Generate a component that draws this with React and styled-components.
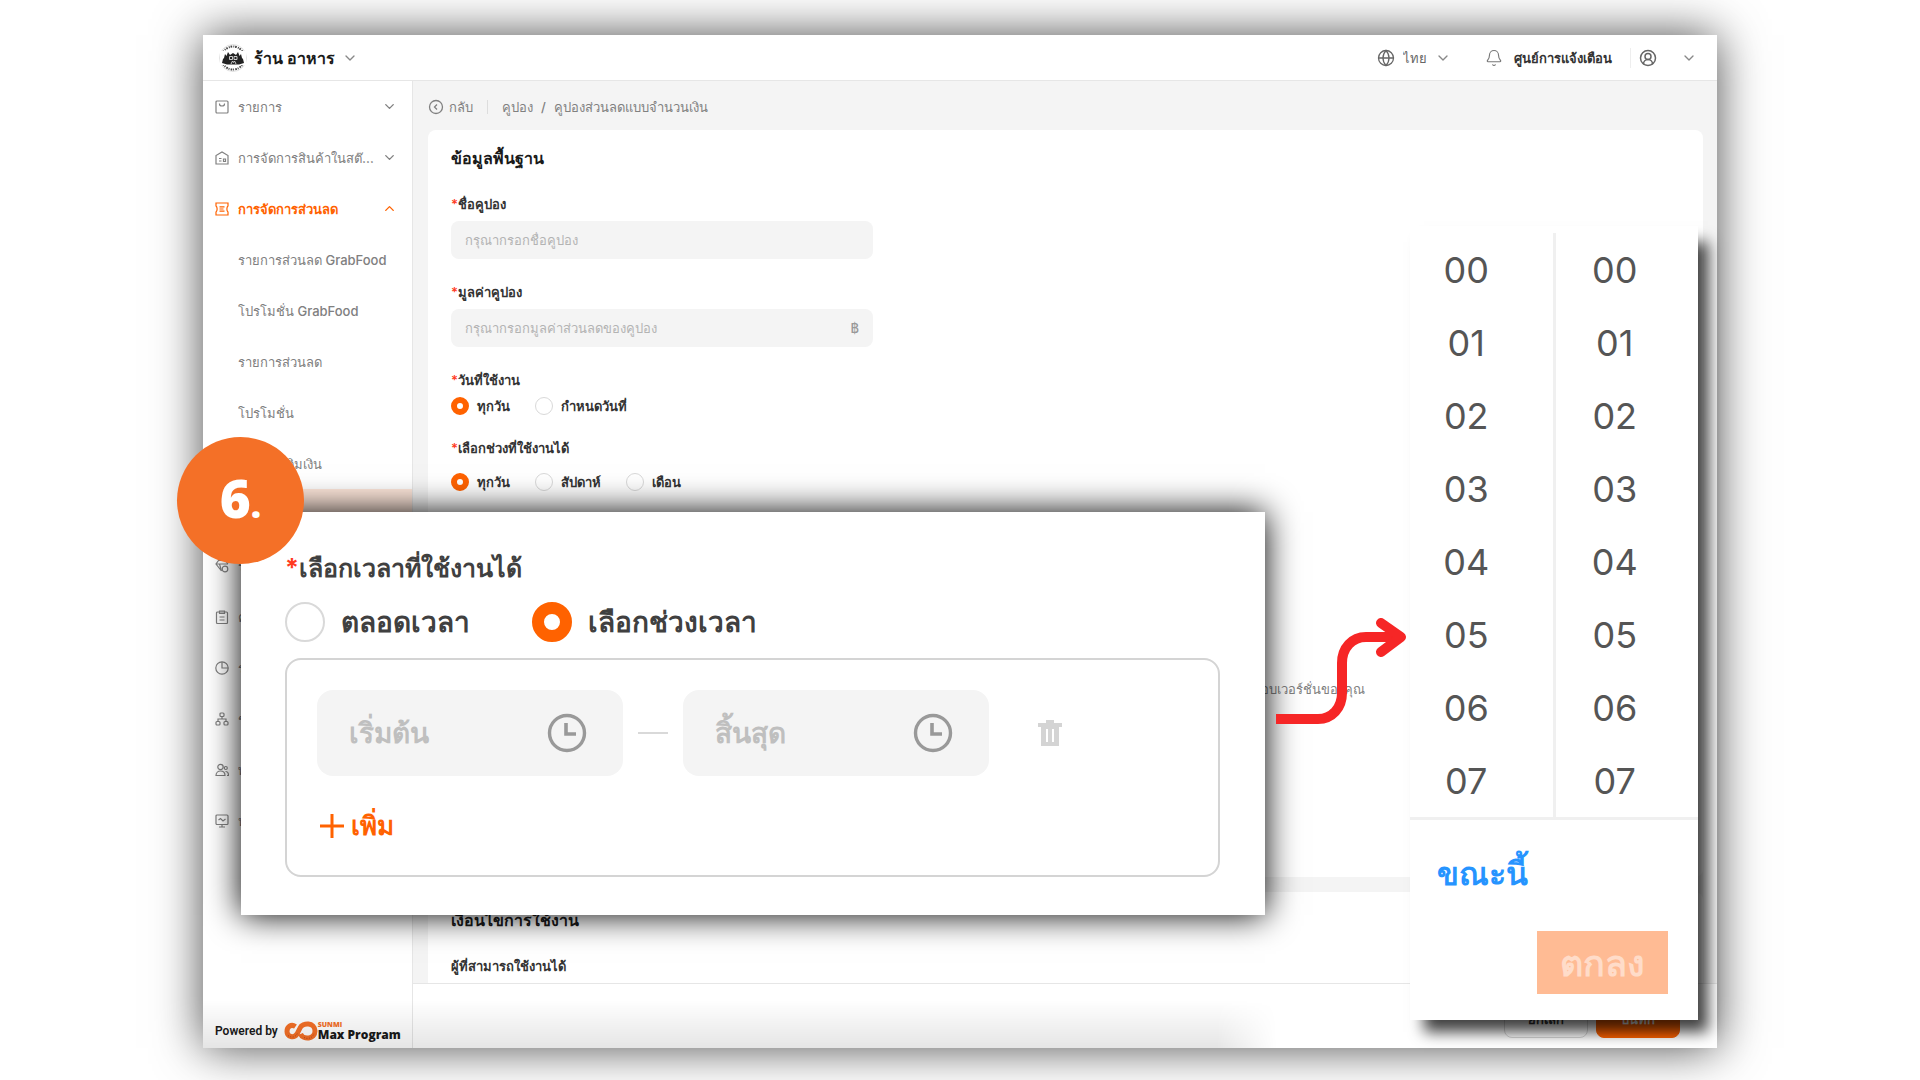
import { useState } from 'react';
import styled, { createGlobalStyle, css } from 'styled-components';
import { Bell, ChevronDown, ChevronUp, CircleUserRound, Globe } from 'lucide-react';

const HOURS = ['00', '01', '02', '03', '04', '05', '06', '07'];

const MENU = [
  { icon: 'bag', label: 'รายการ', arrow: 'down' },
  { icon: 'store', label: 'การจัดการสินค้าในสต๊อก', arrow: 'down' },
  { icon: 'coupon', label: 'การจัดการส่วนลด', arrow: 'up', open: true },
  { label: 'รายการส่วนลด GrabFood' },
  { label: 'โปรโมชั่น GrabFood' },
  { label: 'รายการส่วนลด' },
  { label: 'โปรโมชั่น' },
  { label: 'รายการเติมเงิน' },
  { label: 'คูปอง', active: true },
  { icon: 'gem', label: 'ระบบสมาชิก' },
  { icon: 'clipboard', label: 'คลังสินค้า' },
  { icon: 'pie', label: 'รายงาน' },
  { icon: 'tree', label: 'ช่องทาง' },
  { icon: 'people', label: 'พนักงาน' },
  { icon: 'screen', label: 'หน้าจอ' },
];

const ICONS = {
  bag: <><rect x="1" y="1" width="12" height="12" rx="1" /><path d="M4.5 3.500v.5a2.5 2 0 0 0 5 0v-.5" /></>,
  store: <><path d="M1 13V4.500L7 1l6 3.500V13z" /><path d="M4 7.500h2.500M4 10h2.500M8.500 8h2v2.500h-2z" /></>,
  coupon: <><path d="M1 1h12v3c-1.500 1-1.500 5 0 6v3H1v-3c1.500-1 1.500-5 0-6z" /><path d="M4.500 4.800h5M4.500 7h4M4.500 9.200h5" /></>,
  gem: <><path d="M6.500 12 1 5l2.500-3.500h7L13 5M1 5h12M4.500 5l2 7" /><circle cx="10" cy="10" r="2.800" /></>,
  clipboard: <><rect x="1.500" y="2" width="11" height="11.500" rx="1" /><path d="M4.500 1h5v2.500h-5zM4.500 7h5M4.500 10h5" /></>,
  pie: <><circle cx="7" cy="7" r="6.200" /><path d="M7 1v6h6" /></>,
  tree: <><rect x="5" y="1" width="4" height="3.500" rx="1" /><rect x="1" y="9.500" width="4" height="3.500" rx="1" /><rect x="9" y="9.500" width="4" height="3.500" rx="1" /><path d="M7 4.500V7M3 9.500V7h8v2.500" /></>,
  people: <><circle cx="5.500" cy="4" r="2.700" /><path d="M1 12.500c0-6 9-6 9 0z" /><circle cx="10.800" cy="5" r="1.500" /><path d="M10.500 8.500c2 0 3 1.500 3 4h-1.500" /></>,
  screen: <><rect x="1" y="1" width="12" height="9.500" rx="1" /><path d="M3.500 6 5.500 4.500 8 7l2.500-2M7 10.500V13M4 13h6" /></>,
};

function MenuIcon({ name }) {
  return (
    <svg width="14" height="14" viewBox="0 0 14 14" fill="none" stroke="currentColor" strokeWidth="1.200">
      {ICONS[name]}
    </svg>
  );
}

function ShopLogo() {
  return (
    <svg width="28" height="28" viewBox="0 0 28 28">
      <circle cx="14" cy="14" r="13.500" fill="#fff" stroke="#ccc" strokeWidth=".6" />
      <circle cx="14" cy="14" r="11.500" fill="none" stroke="#444" strokeWidth="2" strokeDasharray="1.400 1 .8 .7" pathLength="60" />
      <path d="M1 7h5v14H1zM22 7h5v14h-5z" fill="#fff" />
      <path d="M3 19l1-4 1-1 1-4 1.500 2L9 8l2 3 3-2 3 2 2-3 1.500 4L22 10l1 4 1 1 1 4-5 1.500H8z" fill="#222" />
      <path d="M10.500 12.500h3v3h-3zM15 12.500h3v3h-3zM12 20l1.500-3 1 1.500 1-1.500 1.500 3" fill="none" stroke="#ddd" strokeWidth=".9" />
    </svg>
  );
}

function BrandLogo() {
  return (
    <svg width="34" height="20" viewBox="0 0 34 20" fill="none" stroke="#f47027" strokeWidth="5">
      <path d="M11.500 5.500C7 2.500 3 6 3 10.500c0 5.500 7 7 10 2.500l3-6C18.500 1.500 31 1 31 10c0 8.500-12 9-14.500 3" />
      <path d="M4 14.500c4 3 8 1.500 9.500-2.500M20 16.500c4 2 9 .5 10-4.500" stroke="#b03a10" strokeWidth=".8" strokeDasharray="1 1.500" />
    </svg>
  );
}

function Clock() {
  return (
    <svg width="40" height="40" viewBox="0 0 40 40" fill="none" stroke="#999" strokeWidth="3.400">
      <circle cx="20" cy="20" r="17.500" />
      <path d="M19 10v11h10" strokeWidth="3.600" />
    </svg>
  );
}

export default function App() {
  const [days, setDays] = useState('every');
  const [range, setRange] = useState('every');
  const [time, setTime] = useState('range');

  return (
    <Page>
      <GlobalStyle />
      <Window>
        <Header>
          <StoreButton>
            <ShopLogo />
            <span>ร้าน อาหาร</span>
            <ChevronDown size={16} color="#888" />
          </StoreButton>
          <Tools>
            <Language>
              <Globe size={18} strokeWidth={1.7} color="#666" />
              <select aria-label="ภาษา" defaultValue="th"><option value="th">ไทย</option></select>
              <ChevronDown size={16} color="#888" />
            </Language>
            <Notice>
              <Bell size={18} strokeWidth={1.500} color="#777" />
              ศูนย์การแจ้งเตือน
            </Notice>
            <Account aria-label="บัญชี">
              <CircleUserRound size={18} strokeWidth={2} color="#666" />
              <ChevronDown size={16} color="#888" />
            </Account>
          </Tools>
        </Header>
        <Body>
          <Sidebar>
            <nav>
              {MENU.map((item, i) => (
                <MenuItem href="#" key={i} $open={item.open} $active={item.active}>
                  <IconSlot>{item.icon && <MenuIcon name={item.icon} />}</IconSlot>
                  <MenuText>{item.label}</MenuText>
                  {item.arrow === 'down' && <ChevronDown size={15} strokeWidth={2.200} />}
                  {item.arrow === 'up' && <ChevronUp size={15} strokeWidth={2.200} />}
                </MenuItem>
              ))}
            </nav>
            <Powered>
              Powered by
              <BrandLogo />
              <Brand><small>SUNMI</small>Max Program</Brand>
            </Powered>
          </Sidebar>
          <Main>
            <Breadcrumb>
              <a href="#">
                <svg width="16" height="16" viewBox="0 0 16 16" fill="none" stroke="currentColor" strokeWidth="1.300">
                  <circle cx="8" cy="8" r="6.500" /><path d="M9 5.500 6.500 8 9 10.500" />
                </svg>
                กลับ
              </a>
              <Rule />
              <a href="#">คูปอง</a>
              <b>/</b>
              <span>คูปองส่วนลดแบบจำนวนเงิน</span>
            </Breadcrumb>
            <Cards>
              <Card $tall>
                <h2>ข้อมูลพื้นฐาน</h2>
                <Field>
                  <label htmlFor="name"><Star>*</Star>ชื่อคูปอง</label>
                  <TextBox><input id="name" placeholder="กรุณากรอกชื่อคูปอง" /></TextBox>
                </Field>
                <Field>
                  <label htmlFor="value"><Star>*</Star>มูลค่าคูปอง</label>
                  <TextBox><input id="value" placeholder="กรุณากรอกมูลค่าส่วนลดของคูปอง" />฿</TextBox>
                </Field>
                <RadioSet>
                  <legend><Star>*</Star>วันที่ใช้งาน</legend>
                  <Choices>
                    <Choice><Radio name="days" checked={days === 'every'} onChange={() => setDays('every')} />ทุกวัน</Choice>
                    <Choice><Radio name="days" checked={days === 'fixed'} onChange={() => setDays('fixed')} />กำหนดวันที่</Choice>
                  </Choices>
                </RadioSet>
                <RadioSet $loose>
                  <legend><Star>*</Star>เลือกช่วงที่ใช้งานได้</legend>
                  <Choices>
                    <Choice><Radio name="range" checked={range === 'every'} onChange={() => setRange('every')} />ทุกวัน</Choice>
                    <Choice><Radio name="range" checked={range === 'week'} onChange={() => setRange('week')} />สัปดาห์</Choice>
                    <Choice><Radio name="range" checked={range === 'month'} onChange={() => setRange('month')} />เดือน</Choice>
                  </Choices>
                </RadioSet>
                <Hint>โปรดตรวจสอบเวอร์ชั่นของคุณ</Hint>
              </Card>
              <Card>
                <h2>เงื่อนไขการใช้งาน</h2>
                <Field><label>ผู้ที่สามารถใช้งานได้</label></Field>
              </Card>
            </Cards>
            <Footer>
              <FooterButton>ยกเลิก</FooterButton>
              <FooterButton $primary>บันทึก</FooterButton>
            </Footer>
          </Main>
        </Body>
      </Window>

      <TimePanel>
        <h3><Star>*</Star>เลือกเวลาที่ใช้งานได้</h3>
        <Choices $large>
          <Choice $large><Radio $large name="time" checked={time === 'all'} onChange={() => setTime('all')} />ตลอดเวลา</Choice>
          <Choice $large><Radio $large name="time" checked={time === 'range'} onChange={() => setTime('range')} />เลือกช่วงเวลา</Choice>
        </Choices>
        <Ranges>
          <RangeRow>
            <TimeBox><input aria-label="เริ่มต้น" placeholder="เริ่มต้น" /><Clock /></TimeBox>
            <Dash />
            <TimeBox><input aria-label="สิ้นสุด" placeholder="สิ้นสุด" /><Clock /></TimeBox>
            <Trash aria-label="ลบ">
              <svg width="24" height="28" viewBox="0 0 24 28" fill="#d4d4d4">
                <path d="M8 1h8v3h8v4h-3v19H3V8H0V4h8zM8 10v13h2V10zM14 10v13h2V10z" fillRule="evenodd" />
              </svg>
            </Trash>
          </RangeRow>
          <AddButton>
            <svg width="24" height="24" viewBox="0 0 24 24" stroke="#ff6200" strokeWidth="3"><path d="M12 0v24M0 12h24" /></svg>
            เพิ่ม
          </AddButton>
        </Ranges>
      </TimePanel>

      <Picker>
        <Columns>
          {['hour', 'minute'].map((unit) => (
            <Column key={unit}>
              {HOURS.map((h) => <li key={h}><button>{h}</button></li>)}
            </Column>
          ))}
        </Columns>
        <NowButton>ขณะนี้</NowButton>
        <OkButton disabled>ตกลง</OkButton>
      </Picker>

      <Arrow width="136" height="112" viewBox="0 0 136 112" fill="none" stroke="#f62626" strokeWidth="10">
        <path d="M0 101h42c14 0 24-11 24-26V45c0-15 10-26 24-26h34" />
        <path d="M105 5l20 14-20 15" strokeLinecap="round" strokeLinejoin="round" />
      </Arrow>
      <Step>6<small>.</small></Step>
    </Page>
  );
}

const GlobalStyle = createGlobalStyle`
  * { box-sizing: border-box; }
  body {
    margin: 0;
    background: #fff;
    color: #333;
    font: 500 13px/20px Inter, sans-serif;
  }
  button, input, select { font: inherit; color: inherit; }
  button { border: 0; padding: 0; background: none; cursor: pointer; }
  h2, h3, ul { margin: 0; padding: 0; }
  a { color: inherit; text-decoration: none; }
  svg { flex: none; }
`

const Page = styled.div`
  position: relative;
  display: flex;
  height: 100vh;
  padding: 35px 203px 32px;
  overflow: hidden;
`
const Window = styled.div`
  position: relative;
  flex: 1;
  display: flex;
  flex-direction: column;
  min-width: 0;
  background: #fff;
  box-shadow: 0 0 45px rgba(0, 0, 0, 0.7);
  /* soft shade along the bottom edge */
  &::after {
    content: '';
    position: absolute;
    inset: auto 440px 0 0;
    height: 48px;
    background: linear-gradient(to top, rgba(0, 0, 0, 0.1), transparent);
    mask-image: linear-gradient(to left, transparent, #000 60px);
    pointer-events: none;
  }
`
const Header = styled.header`
  display: flex;
  justify-content: space-between;
  align-items: center;
  height: 46px;
  padding: 0 20px 0 16px;
  border-bottom: 1px solid #e6e6e6;
`
const StoreButton = styled.button`
  display: flex;
  align-items: center;
  gap: 7px;
  font-size: 16px;
  font-weight: 700;
  color: #1a1a1a;
`
const Tools = styled.div`
  display: flex;
  align-items: center;
`
const Language = styled.label`
  display: flex;
  align-items: center;
  margin-right: 34px;
  color: #666;
  select {
    appearance: none;
    border: 0;
    background: none;
    padding: 0 8px;
  }
`
const Notice = styled.button`
  display: flex;
  align-items: center;
  gap: 11px;
  padding-right: 18px;
  border-right: 1px solid #eee;
  font-weight: 600;
`
const Account = styled.button`
  display: flex;
  align-items: center;
  gap: 24px;
  padding-left: 8px;
`
const Body = styled.div`
  flex: 1;
  display: flex;
  min-height: 0;
`
const Sidebar = styled.aside`
  display: flex;
  flex-direction: column;
  justify-content: space-between;
  flex: none;
  width: 210px;
  border-right: 1px solid #e6e6e6;
`
const MenuItem = styled.a`
  display: flex;
  align-items: center;
  gap: 6px;
  height: 51px;
  padding: 0 15px 0 12px;
  color: ${(p) => (p.$open || p.$active ? '#ff6200' : '#808080')};
  font-weight: ${(p) => (p.$open ? 600 : 500)};
  background: ${(p) => (p.$active ? '#ffe8dc' : 'none')};
`
const IconSlot = styled.span`
  display: flex;
  flex: none;
  width: 17px;
`
const MenuText = styled.span`
  flex: 1;
  line-height: 24px;
  overflow: hidden;
  white-space: nowrap;
  text-overflow: ellipsis;
`
const Powered = styled.div`
  display: flex;
  align-items: center;
  padding: 0 0 7px 12px;
  font: 600 12px/20px Roboto, sans-serif;
  color: #1a1a1a;
  svg { margin-left: 6px; }
`
const Brand = styled.div`
  font: 800 12px/12px "Open Sans", sans-serif;
  small {
    display: block;
    font-size: 7px;
    line-height: 8px;
    color: #f47027;
  }
`
const Main = styled.main`
  flex: 1;
  display: flex;
  flex-direction: column;
  min-width: 0;
  background: #f4f4f4;
`
const Breadcrumb = styled.div`
  display: flex;
  align-items: center;
  height: 49px;
  padding: 3px 15px 0;
  color: #808080;
  a { display: flex; align-items: center; gap: 5px; }
  b { margin: 0 8px; font-weight: 500; }
`
const Rule = styled.i`
  width: 1px;
  height: 14px;
  margin: 0 14px;
  background: #ddd;
`
const Cards = styled.div`
  flex: 1;
  min-height: 0;
  padding: 0 14px 0 15px;
  overflow: hidden;
`
const Card = styled.section`
  min-height: ${(p) => (p.$tall ? 747 : 160)}px;
  margin-bottom: 15px;
  padding: 16px 23px;
  border-radius: 8px;
  background: #fff;
  h2 {
    margin-bottom: 24px;
    font-size: 16px;
    line-height: 24px;
    color: #1a1a1a;
  }
`
const Field = styled.div`
  margin-bottom: 23px;
  label { display: block; font-weight: 600; }
`
const Star = styled.span`
  color: #ff3b1f;
`
const TextBox = styled.div`
  display: flex;
  align-items: center;
  max-width: 422px;
  height: 38px;
  margin-top: 7px;
  padding: 0 14px;
  border-radius: 8px;
  background: #f4f4f4;
  color: #999;
  input {
    flex: 1;
    border: 0;
    padding: 0;
    background: none;
    outline: 0;
    &::placeholder { color: #b3b3b3; }
  }
`
const RadioSet = styled.fieldset`
  margin: 0 0 22px;
  padding: 0;
  border: 0;
  font-weight: 600;
  legend { padding: 0; margin-bottom: ${(p) => (p.$loose ? 14 : 6)}px; }
`
const Choices = styled.div`
  display: flex;
  gap: ${(p) => (p.$large ? 62 : 25)}px;
`
const Choice = styled.label`
  display: flex;
  align-items: center;
  gap: 8px;
  height: 20px;
  ${(p) => p.$large && css`
    gap: 16px;
    height: 40px;
    font-size: 28px;
    font-weight: 600;
  `}
`
const Radio = styled.input.attrs({ type: 'radio' })`
  appearance: none;
  flex: none;
  width: ${(p) => (p.$large ? 40 : 18)}px;
  height: ${(p) => (p.$large ? 40 : 18)}px;
  margin: 0;
  border: ${(p) => (p.$large ? 2 : 1)}px solid #d9d9d9;
  border-radius: 50%;
  background: #fff;
  &:checked { border: ${(p) => (p.$large ? 12 : 6)}px solid #ff6200; }
`
const Hint = styled.p`
  max-width: 914px;
  margin: 187px 0 0;
  text-align: right;
  color: #808080;
`
const Footer = styled.footer`
  display: flex;
  justify-content: flex-end;
  align-items: center;
  gap: 8px;
  flex: none;
  height: 65px;
  padding: 6px 37px 0;
  border-top: 1px solid #e6e6e6;
  background: #fff;
`
const FooterButton = styled.button`
  width: 84px;
  height: 38px;
  border: 1px solid ${(p) => (p.$primary ? '#ff6200' : '#d9d9d9')};
  border-radius: 8px;
  background: ${(p) => (p.$primary ? '#ff6200' : '#fff')};
  color: ${(p) => (p.$primary ? '#fff' : '#333')};
  font-weight: 600;
`
const TimePanel = styled.section`
  position: absolute;
  left: 241px;
  top: 512px;
  width: 1024px;
  padding: 36px 45px 38px 44px;
  background: #fff;
  box-shadow: 0 0 32px #000;
  color: #404040;
  h3 {
    margin-bottom: 14px;
    font-size: 25px;
    line-height: 40px;
  }
`
const Ranges = styled.div`
  margin-top: 16px;
  padding: 30px 30px 29px;
  border: 2px solid #d4d4d4;
  border-radius: 16px;
`
const RangeRow = styled.div`
  display: flex;
  align-items: center;
`
const TimeBox = styled.div`
  display: flex;
  align-items: center;
  width: 306px;
  height: 86px;
  padding: 0 36px 0 32px;
  border-radius: 16px;
  background: #f4f4f4;
  font-size: 28px;
  font-weight: 600;
  line-height: 60px;
  input {
    flex: 1;
    min-width: 0;
    height: 60px;
    border: 0;
    padding: 0;
    background: none;
    outline: 0;
    &::placeholder { color: #bfbfbf; }
  }
`
const Dash = styled.i`
  width: 30px;
  height: 2px;
  margin: 0 15px;
  background: #d9d9d9;
`
const Trash = styled.button`
  display: flex;
  margin-left: 49px;
`
const AddButton = styled.button`
  display: flex;
  align-items: center;
  gap: 7px;
  margin: 30px 0 0 3px;
  font-size: 26px;
  font-weight: 600;
  line-height: 40px;
  color: #ff6200;
`
const Picker = styled.section`
  position: absolute;
  left: 1410px;
  top: 226px;
  width: 288px;
  padding: 7px 0 26px;
  display: flex;
  flex-direction: column;
  background: #fff;
  box-shadow: 12px 14px 14px -2px rgba(0, 0, 0, 0.75);
`
const Columns = styled.div`
  display: flex;
  border-bottom: 3px solid #f0f0f0;
`
const Column = styled.ul`
  flex: 1;
  list-style: none;
  button {
    width: 100%;
    height: 73px;
    padding: 1px 30px 0 0;
    font-size: 36px;
    font-weight: 400;
    color: #555;
  }
  & + & {
    border-left: 3px solid #f0f0f0;
    button { padding-right: 24px; }
  }
`
const NowButton = styled.button`
  align-self: flex-start;
  margin: 29px 27px 0;
  font-size: 32px;
  font-weight: 600;
  line-height: 50px;
  color: #2694ff;
`
const OkButton = styled.button`
  align-self: flex-end;
  width: 131px;
  height: 63px;
  margin: 32px 30px 0;
  background: #ffbb94;
  color: #ffdcc9;
  font-size: 36px;
  font-weight: 600;
`
const Arrow = styled.svg`
  position: absolute;
  left: 1276px;
  top: 618px;
`
const Step = styled.div`
  position: absolute;
  left: 177px;
  top: 437px;
  display: flex;
  justify-content: center;
  align-items: baseline;
  width: 127px;
  height: 127px;
  border-radius: 50%;
  background: #f47027;
  color: #fff;
  font: 800 53px/122px "Open Sans", sans-serif;
  small { font-size: 36px; }
`
